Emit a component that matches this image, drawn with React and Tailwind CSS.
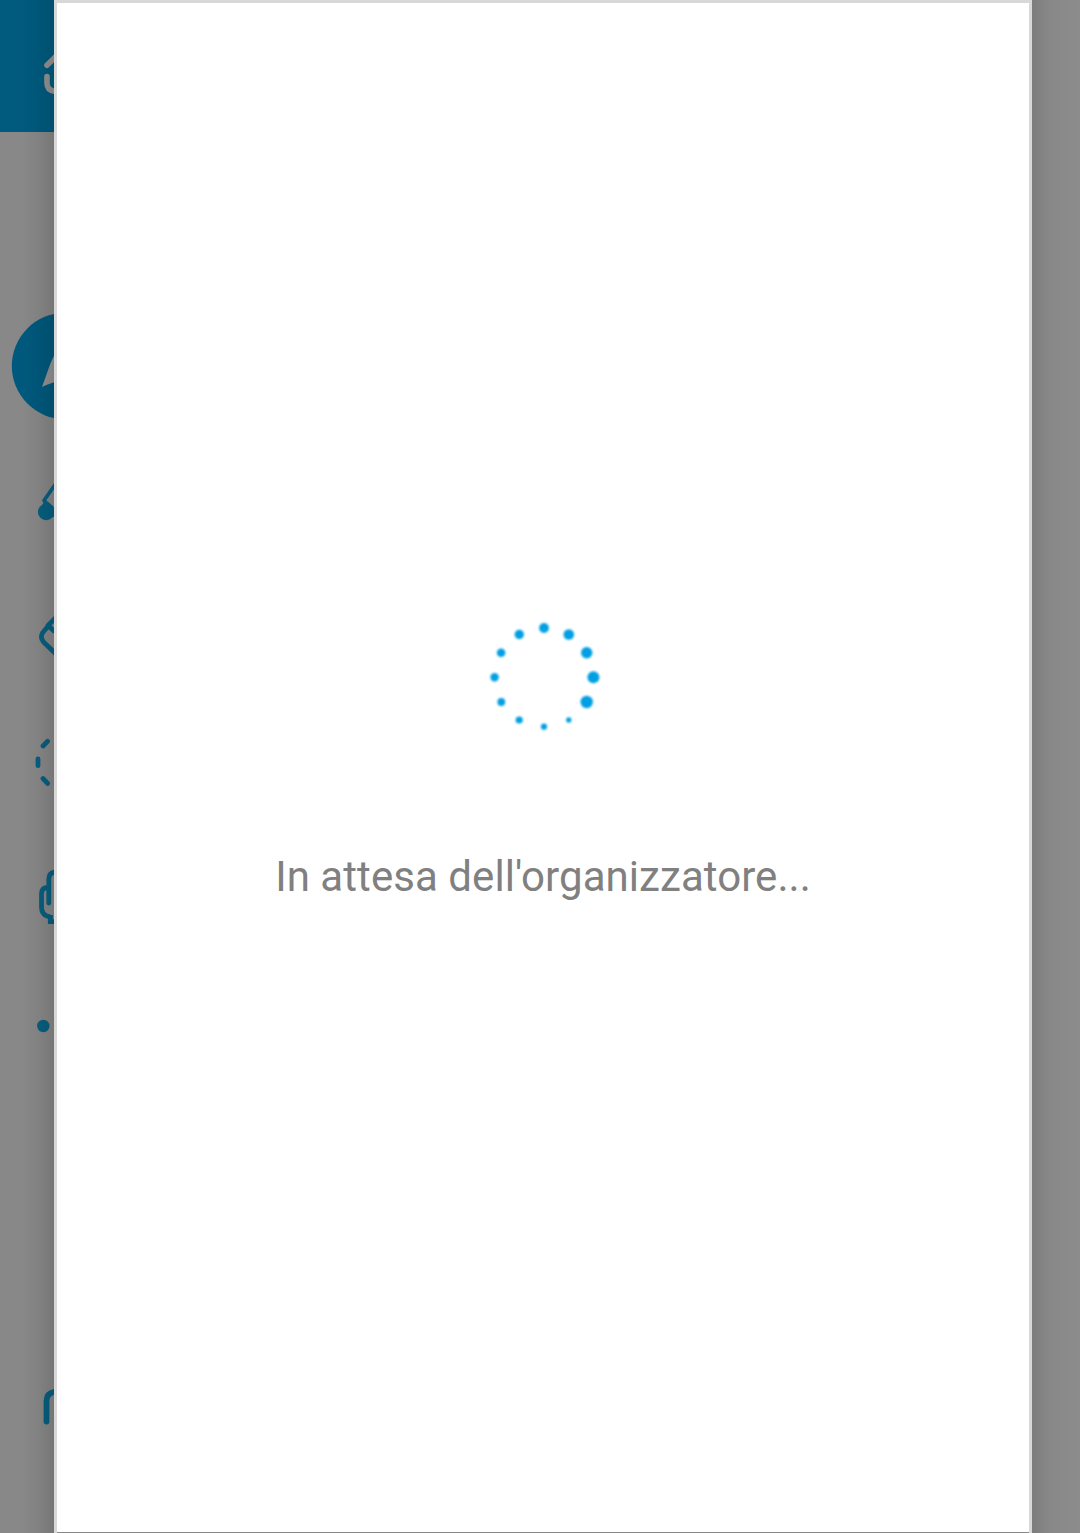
const dots = [
  [64, 18, 4.9], [88.8, 24.5, 5.3], [106.7, 42.7, 5.7], [113.4, 67.3, 6],
  [106.7, 92, 6.2], [88.8, 110, 2.7], [64, 116.7, 3.1], [39.2, 110, 3.6],
  [21.3, 92, 3.9], [14.6, 67.3, 4.2], [21.1, 42.7, 4.3], [39.3, 24.5, 4.7],
];

function Tool({ top, className, children }) {
  return (
    <svg viewBox={`0 ${top} 54 132`} className={`block h-[132px] w-[54px] shrink-0 ${className || ''}`}
      fill="none" stroke="#075f80" strokeWidth="4.8" strokeLinecap="round" strokeLinejoin="round">
      {children}
    </svg>
  );
}

function Spinner() {
  return (
    <svg viewBox="0 0 128 128" className="mt-[607px] ml-[2px] block h-32 w-32 shrink-0 blur-[0.8px]" fill="#009fe3">
      {dots.map(([x, y, r]) => <circle key={`${x}-${y}`} cx={x} cy={y} r={r} />)}
    </svg>
  );
}

export default function App() {
  return (
    <div className="flex h-[1533px] w-[1080px] overflow-hidden bg-[#8a8a8a] font-['Roboto',sans-serif]">
      <aside className="relative flex w-[54px] shrink-0 flex-col overflow-hidden bg-[#888888]">
        <header className="h-[132px] shrink-0 bg-[#005b7f]">
          <Tool top={0}>
            <path d="M47 65.3 L60 52.3 M47 76.5 V83 Q47 91.3 57 91.3" stroke="#939393" strokeWidth="5.6" />
          </Tool>
        </header>
        <Tool top={300} className="mt-[168px]">
          <circle cx="65" cy="366" r="53.2" fill="#00597d" stroke="none" />
          <path d="M42 387 L49.5 366 Q51.5 360 58 348 V381 Q48 384 42 387Z" fill="#939393" stroke="none" />
        </Tool>
        <Tool top={432}>
          <path d="M58 480.5 L44 500.5 L47 503.5" strokeWidth="3.6" />
          <circle cx="46.2" cy="512" r="8.3" fill="#075f80" stroke="none" />
          <path d="M44 501 L49 502.5 L55 508 V518 L48 512 L42 506Z" fill="#075f80" stroke="none" />
        </Tool>
        <Tool top={564}>
          <path d="M58 615.5 L48 625.5 L54 631 M47.5 627 L42.8 632.5 Q39.7 637.5 43.5 642 L57 655" />
        </Tool>
        <Tool top={696}>
          <path d="M47.5 741.3 L43 746 M38 759 V765.7 M43 778.5 L47.6 783.4" />
        </Tool>
        <Tool top={828}>
          <path d="M48.8 903 V879 Q48.8 871.8 57 871.8 M48 887.5 Q41.5 887.5 41.5 894 V907 Q41.5 914 47 916 L50.3 917" />
          <path d="M50.3 915 V921.7 H58" strokeLinecap="butt" strokeLinejoin="miter" />
        </Tool>
        <Tool top={960}>
          <circle cx="43.3" cy="1026" r="6.2" fill="#075f80" stroke="none" />
        </Tool>
        <Tool top={1340} className="mt-[248px]">
          <path d="M46.5 1421.5 V1401 Q46.5 1392 57 1391.5" strokeWidth="5.8" />
        </Tool>
        <div className="absolute inset-y-0 right-0 w-8 bg-linear-to-l from-black/13 via-black/5 to-transparent" />
      </aside>
      <main className="flex w-[978px] shrink-0 flex-col border-x-[3px] border-t-[3px] border-[#d8d8d8] bg-[#888888]">
        <section className="flex h-[1529px] flex-col items-center bg-white">
          <Spinner />
          <p className="mt-[114px] text-[42px] leading-[50px] tracking-[0.06px] whitespace-nowrap text-[#808080]">
            In attesa dell'organizzatore...
          </p>
        </section>
      </main>
      <div className="flex-1 bg-linear-to-r from-[#7c7c7c] via-[#888888] via-35% to-[#8c8c8c]" />
    </div>
  );
}
